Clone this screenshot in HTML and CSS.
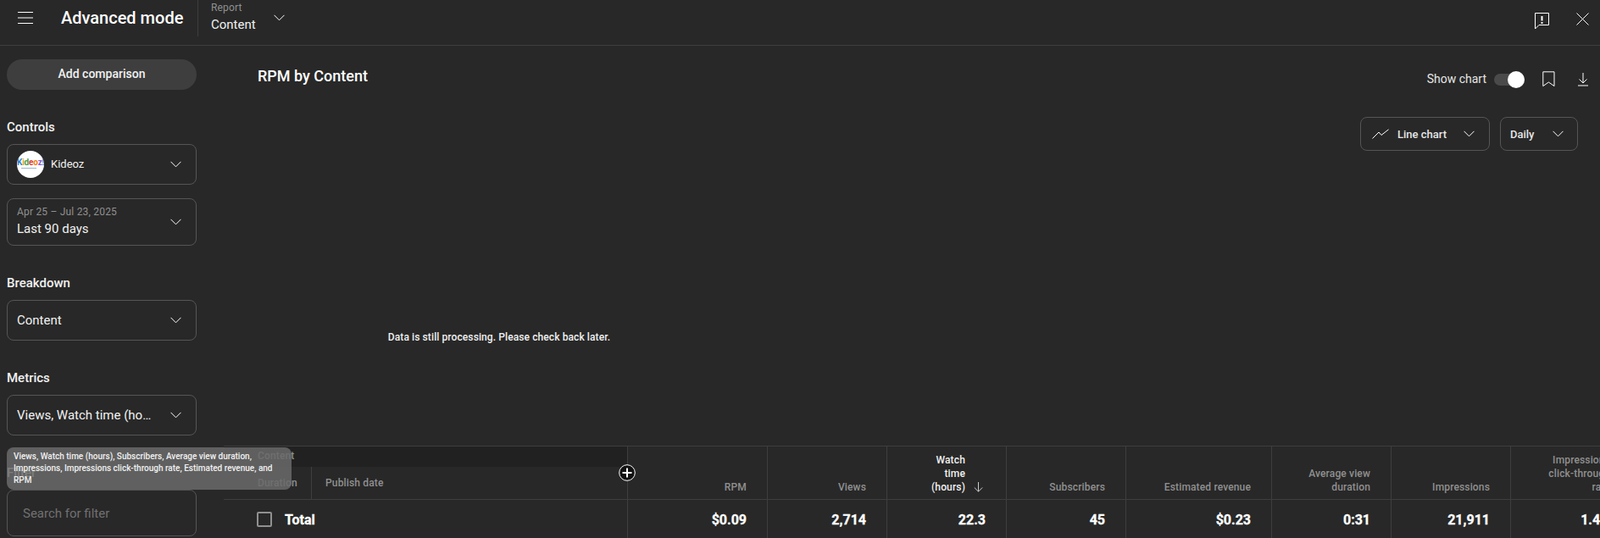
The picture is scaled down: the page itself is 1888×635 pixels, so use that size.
FILE: index.html
```html
<!DOCTYPE html>
<html lang="en">
<head>
    <meta charset="UTF-8">
    <meta name="viewport" content="width=device-width, initial-scale=1.0">
    <title>Advanced mode</title>
    <link rel="stylesheet" href="styles.css">
</head>
<body>
    <svg class="defs" width="0" height="0">
        <symbol id="chev" viewBox="0 0 13 8"><path d="M.5 .8 6.5 6.8 12.5 .8" fill="none" stroke="#fff"/></symbol>
    </svg>

    <header class="topbar">
        <svg class="burger" width="18" height="14" viewBox="0 0 18 14"><path d="M0 .5H18M0 7H18M0 13.5H18" stroke="#fff"/></svg>
        <div class="page-title">Advanced mode</div>
        <div class="top-divider"></div>
        <div class="report">
            <div class="report-label">Report</div>
            <div class="report-value">Content</div>
        </div>
        <svg class="chev report-chev"><use href="#chev"/></svg>
        <div class="top-icons">
            <svg width="17" height="20" viewBox="0 0 17 20"><path d="M.5 .5H16.5V14.5H5L.5 19Z" fill="none" stroke="#fff"/><path d="M8.5 4V9.5M8.5 11V13" stroke="#fff" stroke-width="2"/></svg>
            <svg width="15" height="15" viewBox="0 0 15 15"><path d="M.5 .5 14.5 14.5M14.5 .5 .5 14.5" stroke="#fff"/></svg>
        </div>
    </header>

    <div class="layout">
        <aside class="sidebar">
            <button class="add-btn">Add comparison</button>

            <div class="group">
                <h3>Controls</h3>
                <div class="select small">
                    <span class="logo"><span class="logo-text"><i class="c1">K</i><i class="c2">i</i><i class="c3">d</i><i class="c4">e</i><i class="c5">o</i><i class="c6">z</i><i class="c1">!</i></span></span>
                    <span class="select-text">Kideoz</span>
                    <svg class="chev"><use href="#chev"/></svg>
                </div>
                <div class="select tall">
                    <div class="select-text">
                        <div class="date-range">Apr 25 – Jul 23, 2025</div>
                        <div>Last 90 days</div>
                    </div>
                    <svg class="chev"><use href="#chev"/></svg>
                </div>
            </div>

            <div class="group">
                <h3>Breakdown</h3>
                <div class="select">
                    <span class="select-text">Content</span>
                    <svg class="chev"><use href="#chev"/></svg>
                </div>
            </div>

            <div class="group">
                <h3>Metrics</h3>
                <div class="select">
                    <span class="select-text ellipsis">Views, Watch time (hours), Subscribers, Average view duration, Impressions</span>
                    <svg class="chev"><use href="#chev"/></svg>
                </div>
            </div>

            <div class="group">
                <h3>Filter</h3>
                <div class="search">Search for filter</div>
            </div>
        </aside>

        <main class="main">
            <div class="title-row">
                <h2>RPM by Content</h2>
                <div class="title-tools">
                    <span class="show-chart">Show chart</span>
                    <span class="toggle"><span class="knob"></span></span>
                    <svg class="bookmark" width="15" height="19" viewBox="0 0 15 19"><path d="M.8 .8H14V17.6L7.4 13 .8 17.6Z" fill="none" stroke="#fff"/></svg>
                    <svg class="download" width="12" height="16" viewBox="0 0 12 16"><path d="M6 0V11.5M1.5 7.5 6 12 10.5 7.5M0 15H12" fill="none" stroke="#fff"/></svg>
                </div>
            </div>

            <div class="chart-controls">
                <div class="mini-select line-select">
                    <svg width="20" height="12" viewBox="0 0 20 12"><path d="M.5 11.5 8 4 11 7.5 19.5 .8" fill="none" stroke="#fff"/></svg>
                    <span>Line chart</span>
                    <svg class="chev"><use href="#chev"/></svg>
                </div>
                <div class="mini-select daily-select">
                    <span>Daily</span>
                    <svg class="chev"><use href="#chev"/></svg>
                </div>
            </div>

            <div class="chart-body">Data is still processing. Please check back later.</div>

            <div class="tbl">
                <div class="th th-first">
                    <div class="th-content">Content</div>
                    <div class="th-sub">
                        <span class="sub-duration">Duration</span>
                        <span class="sub-date">Publish date</span>
                    </div>
                    <span class="add-col">
                        <svg width="20" height="20" viewBox="0 0 20 20"><circle cx="10" cy="10" r="9.3" fill="#111" stroke="#fff"/><path d="M10 4.5V15.5M4.5 10H15.5" stroke="#fff" stroke-width="2"/></svg>
                    </span>
                </div>
                <div class="th">RPM</div>
                <div class="th">Views</div>
                <div class="th th-sorted">
                    <span class="sort-label">Watch time (hours)</span>
                    <svg width="11" height="12" viewBox="0 0 11 12"><path d="M5.5 0V11M.8 6.5 5.5 11.2 10.2 6.5" fill="none" stroke="#ccc"/></svg>
                </div>
                <div class="th">Subscribers</div>
                <div class="th">Estimated revenue</div>
                <div class="th"><span class="wrap-avg">Average view duration</span></div>
                <div class="th">Impressions</div>
                <div class="th"><span class="wrap-ctr">Impressions click-through rate</span></div>

                <div class="td td-first">
                    <span class="checkbox"></span>
                    <span>Total</span>
                </div>
                <div class="td">$0.09</div>
                <div class="td">2,714</div>
                <div class="td">22.3</div>
                <div class="td">45</div>
                <div class="td">$0.23</div>
                <div class="td">0:31</div>
                <div class="td">21,911</div>
                <div class="td">1.4%</div>
            </div>
        </main>
    </div>

    <div class="tooltip">Views, Watch time (hours), Subscribers, Average view duration, Impressions, Impressions click-through rate, Estimated revenue, and RPM</div>
</body>
</html>
```

FILE: styles.css
```css
* { box-sizing: border-box; }
html, body { height: 635px; }
body { margin: 0; background: #282828; color: #fff; font-family: Roboto, "Liberation Sans", sans-serif; overflow: hidden; position: relative; }
h2, h3 { margin: 0; font-weight: 500; }
.defs { position: absolute; }

/* top bar */
.topbar { display: flex; align-items: flex-start; height: 54px; border-bottom: 1px solid #3e3e3e; padding-left: 21px; }
.burger { margin-top: 14px; flex: none; }
.page-title { margin-left: 33px; width: 161px; font-size: 20px; font-weight: 500; line-height: 42px; }
.top-divider { width: 1px; height: 43px; background: #3e3e3e; }
.report { margin-left: 15px; width: 74px; }
.report-label { font-size: 12px; line-height: 18px; letter-spacing: .15px; color: #909090; }
.report-value { font-size: 15px; line-height: 20px; margin-top: 1px; color: #f1f1f1; }
.chev { width: 13px; height: 8px; flex: none; }
.report-chev { margin-top: 17px; }
.top-icons { margin-left: auto; display: flex; align-items: flex-start; gap: 32px; padding: 15px 13px 0 0; }

/* left column */
.layout { display: flex; height: 581px; }
.sidebar { width: 264px; flex: none; padding: 16px 32px 0 8px; }
.add-btn { display: block; width: 100%; height: 36px; border: 0; border-radius: 18px; background: #3e3e3e; color: #f1f1f1; font: 500 14px Roboto, sans-serif; padding-bottom: 3px; }
.group { margin-top: 34px; }
.group h3 { font-size: 15px; line-height: 20px; margin-bottom: 10px; color: #f1f1f1; }
.select { display: flex; align-items: center; justify-content: space-between; height: 48px; border: 1px solid #555; border-radius: 8px; padding: 0 17px 0 11px; font-size: 15px; color: #f1f1f1; }
.select .select-text { flex: 1; min-width: 0; padding-bottom: 1px; }
.select.small { padding-left: 11px; font-size: 13px; }
.select.tall { height: 56px; margin-top: 16px; }
.select.tall .select-text { padding-bottom: 3px; }
.date-range { font-size: 12px; line-height: 16px; letter-spacing: .2px; color: #909090; margin-bottom: 3px; }
.ellipsis { white-space: nowrap; overflow: hidden; text-overflow: ellipsis; margin-right: 21px; }
.logo { width: 32px; height: 32px; border-radius: 50%; background: #fff; margin-right: 8px; flex: none; display: flex; align-items: center; justify-content: center; overflow: hidden; }
.logo-text { font-size: 10px; font-weight: 700; letter-spacing: -.2px; line-height: 10px; margin-bottom: 2px; }
.logo-text::after { content: ""; display: block; width: 18px; height: 1px; margin: 1px 0 0 5px; background: #9db4cc; }
.logo-text i { font-style: normal; }
.c1 { color: #2f7fd0; }
.c2 { color: #e8a020; }
.c3 { color: #43a047; }
.c4 { color: #e53935; }
.c5 { color: #f57c00; }
.c6 { color: #8e5bc8; }
.search { height: 55px; border: 1px solid #555; border-radius: 8px; padding: 0 18px; line-height: 55px; font-size: 15px; color: #717171; }

/* chart area */
.main { flex: 1; min-width: 0; overflow: hidden; }
.title-row { display: flex; justify-content: space-between; align-items: flex-start; height: 24px; margin-top: 24px; padding: 0 14px 0 40px; }
.title-row h2 { font-size: 18px; line-height: 24px; }
.title-tools { display: flex; align-items: center; margin-top: 6px; }
.show-chart { font-size: 14px; color: #e6e6e6; margin-right: 9px; padding-bottom: 2px; }
.toggle { position: relative; width: 36px; height: 14px; border-radius: 7px; background: #4a4a4a; }
.knob { position: absolute; right: 0; top: -3px; width: 20px; height: 20px; border-radius: 50%; background: #fff; }
.bookmark { margin-left: 21px; }
.download { margin-left: 27px; }
.chart-controls { display: flex; justify-content: flex-end; gap: 12px; margin-top: 36px; padding-right: 26px; }
.mini-select { display: flex; align-items: center; height: 40px; border: 1px solid #555; border-radius: 8px; font-size: 13px; font-weight: 500; color: #e6e6e6; }
.line-select { width: 153px; padding-left: 13px; }
.line-select span { margin-left: 10px; width: 78px; }
.daily-select { width: 92px; padding-left: 11px; }
.daily-select span { width: 50px; }
.chart-body { height: 348px; width: 650px; padding-top: 210px; text-align: center; font-size: 12px; font-weight: 500; letter-spacing: .1px; line-height: 20px; color: #f1f1f1; }

/* table */
.tbl { display: grid; grid-template-columns: 476px 165px 141px 141px 141px 172px 141px 141px 142px; grid-template-rows: 63px 45px; width: 1660px; border-top: 1px solid #3e3e3e; }
.th { display: flex; align-items: flex-end; justify-content: flex-end; text-align: right; border-left: 1px solid #3e3e3e; border-bottom: 1px solid #3e3e3e; padding: 0 24px 6px 0; font-size: 12px; font-weight: 500; letter-spacing: .15px; line-height: 16px; color: #909090; }
.th-first { display: block; position: relative; border-left: 0; padding: 0; text-align: left; }
.th-content { height: 24px; background: #212121; padding-left: 40px; line-height: 22px; color: #909090; }
.th-sub { display: flex; height: 38px; }
.sub-duration { width: 104px; padding: 11px 0 0 40px; border-right: 1px solid #3e3e3e; }
.sub-date { padding: 11px 0 0 16px; }
.add-col { position: absolute; right: -10px; top: 21px; width: 20px; height: 20px; z-index: 1; }
.add-col svg { display: block; }
.th-sorted { color: #f1f1f1; padding-right: 27px; }
.th-sorted svg { flex: none; margin: 0 0 2px 10px; }
.sort-label { width: 50px; }
.wrap-avg { width: 90px; }
.wrap-ctr { width: 76px; }
.td { border-left: 1px solid #3e3e3e; padding: 12px 24px 0 0; text-align: right; font-size: 16px; font-weight: 700; line-height: 24px; -webkit-text-stroke: .3px #fff; }
.td-first { display: flex; align-items: flex-start; gap: 15px; border-left: 0; padding-left: 39px; text-align: left; }
.checkbox { width: 18px; height: 18px; margin-top: 2px; border: 2px solid #909090; border-radius: 2px; }

/* hover tooltip over the sidebar */
.tooltip { position: absolute; left: 8px; top: 528px; width: 336px; height: 50px; padding: 4px 8px; border-radius: 8px; background: rgba(106, 106, 106, .85); font-size: 10px; font-weight: 500; line-height: 14px; color: #f1f1f1; z-index: 2; }
```
